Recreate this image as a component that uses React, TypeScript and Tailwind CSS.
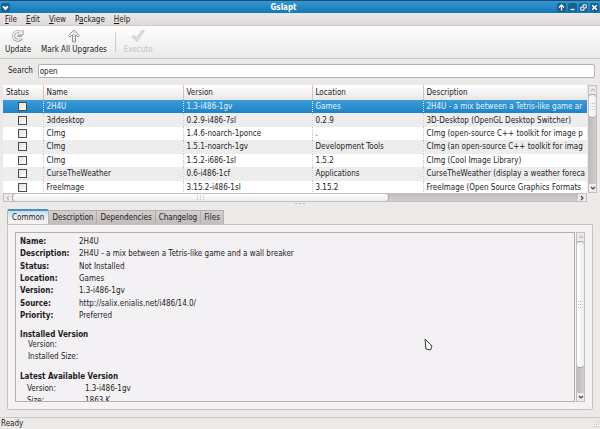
import React, { useState } from 'react';

interface Pkg {
  name: string;
  version: string;
  location: string;
  description: string;
}

const packages: Pkg[] = [
  { name: '2H4U', version: '1.3-i486-1gv', location: 'Games', description: '2H4U - a mix between a Tetris-like game ar' },
  { name: '3ddesktop', version: '0.2.9-i486-7sl', location: '0.2.9', description: '3D-Desktop (OpenGL Desktop Switcher)' },
  { name: 'CImg', version: '1.4.6-noarch-1ponce', location: '.', description: 'CImg (open-source C++ toolkit for image p' },
  { name: 'CImg', version: '1.5.1-noarch-1gv', location: 'Development Tools', description: 'CImg (an open-source C++ toolkit for imag' },
  { name: 'CImg', version: '1.5.2-i686-1sl', location: '1.5.2', description: 'CImg (Cool Image Library)' },
  { name: 'CurseTheWeather', version: '0.6-i486-1cf', location: 'Applications', description: 'CurseTheWeather (display a weather foreca' },
  { name: 'FreeImage', version: '3.15.2-i486-1sl', location: '3.15.2', description: 'FreeImage (Open Source Graphics Formats' },
];

const details = [
  ['Name:', '2H4U'],
  ['Description:', '2H4U - a mix between a Tetris-like game and a wall breaker'],
  ['Status:', 'Not Installed'],
  ['Location:', 'Games'],
  ['Version:', '1.3-i486-1gv'],
  ['Source:', 'http://salix.enialis.net/i486/14.0/'],
  ['Priority:', 'Preferred'],
];

const menus = [
  ['', 'F', 'ile'],
  ['', 'E', 'dit'],
  ['', 'V', 'iew'],
  ['P', 'a', 'ckage'],
  ['', 'H', 'elp'],
];

const tabs = ['Common', 'Description', 'Dependencies', 'Changelog', 'Files'];

const WindowButton: React.FC<{ label: string; children: React.ReactNode }> = ({ label, children }) => (
  <button aria-label={label} className="flex h-[9px] w-[9px] items-center justify-center rounded-xs bg-[#17618f]">
    <svg viewBox="0 0 9 9" className="h-[9px] w-[9px]" fill="none" stroke="#fff" strokeWidth="1.3">
      {children}
    </svg>
  </button>
);

const ToolButton: React.FC<{ label: string; disabled?: boolean; children: React.ReactNode }> = ({ label, disabled, children }) => (
  <button disabled={disabled} className="flex flex-col items-center gap-[2px] whitespace-nowrap px-[5px] text-[#1c1c1c] disabled:text-[#c3c3c3]">
    <svg viewBox="0 0 14 14" className="h-[14px] w-[14px]" fill="none">
      {children}
    </svg>
    <span className="leading-[10px]">{label}</span>
  </button>
);

const Arrow: React.FC<{ d: string; label: string; dim?: boolean }> = ({ d, label, dim }) => (
  <button aria-label={label} className={`flex h-2 w-2 shrink-0 items-center justify-center ${dim ? 'text-[#bdbbba]' : 'text-[#444]'}`}>
    <svg viewBox="0 0 6 6" className="h-[6px] w-[6px]" fill="none" stroke="currentColor" strokeWidth="1.1">
      <path d={d} />
    </svg>
  </button>
);

const Grip: React.FC<{ vertical?: boolean }> = ({ vertical }) => (
  <svg viewBox="0 0 5 7" className={vertical ? 'h-[7px] w-[5px]' : 'h-[7px] w-[5px] rotate-90'} fill="#c4c1c1">
    <path d="M0 0h1v1H0zM2 0h1v1H2zM4 0h1v1H4zM0 3h1v1H0zM2 3h1v1H2zM4 3h1v1H4zM0 6h1v1H0zM2 6h1v1H2zM4 6h1v1H4z" />
  </svg>
);

const VScroll: React.FC<{ thumb: string }> = ({ thumb }) => (
  <div className="flex w-[9px] shrink-0 flex-col items-center overflow-hidden border border-[#c2bfbe] bg-[#eceaea]">
    <Arrow d="M1 4L3 2L5 4" label="Scroll up" dim />
    <div className="min-h-0 w-full flex-1 bg-linear-to-r from-[#bfbbbb] to-[#d3cfcf]">
      <div className={`flex w-full items-center justify-center rounded-sm border-y border-[#a9a5a5] bg-linear-to-r from-white to-[#efeded] ${thumb}`}>
        <Grip vertical />
      </div>
    </div>
    <Arrow d="M1 2L3 4L5 2" label="Scroll down" />
  </div>
);

const App: React.FC = () => {
  const [query, setQuery] = useState('open');
  const [tab, setTab] = useState('Common');

  return (
    <div className="flex h-screen flex-col overflow-hidden bg-[#ebeae8] font-['DejaVu_Sans_Condensed','DejaVu_Sans',sans-serif] text-[8px] leading-[12px] text-[#1c1c1c]">
      <header className="flex h-[13px] shrink-0 items-center border-t border-[#1d4d69] bg-linear-to-b from-[#3297d4] to-[#1478b5] px-px">
        <WindowButton label="Window menu">
          <path d="M2 3.5L4.500 4.500L7 3.500L4.500 6.500z" fill="#fff" />
        </WindowButton>
        <h1 className="flex-1 pt-px text-center font-bold leading-[11px] text-white">Gslapt</h1>
        <div className="flex justify-end gap-[2px]">
          <WindowButton label="Shade">
            <path d="M4.500 7.500V2.500M2 4.500L4.500 2L7 4.500" />
          </WindowButton>
          <WindowButton label="Minimize">
            <path d="M2.500 6.500H6.500" />
          </WindowButton>
          <WindowButton label="Maximize">
            <path d="M1.800 4H5V7.200H1.800zM4 3.500V1.800H7.200V5H5.500" strokeWidth="1" />
          </WindowButton>
          <WindowButton label="Close">
            <path d="M2.200 2.200L6.800 6.800M6.800 2.200L2.200 6.800" strokeWidth="1.600" />
          </WindowButton>
        </div>
      </header>

      <nav className="flex h-[13px] shrink-0 items-center gap-[9px] border-b border-[#d0cccb] bg-linear-to-b from-[#ebe8e7] to-[#dfdbda] px-[5px] pt-px">
        {menus.map(([before, key, after]) => (
          <button key={key}>
            {before}
            <span className="underline">{key}</span>
            {after}
          </button>
        ))}
      </nav>

      <div className="flex h-[33px] shrink-0 items-center border-b border-[#cbc9c8] bg-linear-to-b from-white to-[#ebeae9]">
        <ToolButton label="Update">
          <g stroke="#8e8e8e" strokeWidth="3">
            <path d="M10.500 9.500A4.300 4.300 0 1 1 9.500 3.500" />
            <path d="M12 1V6H6.500" strokeWidth="1" />
          </g>
          <path d="M10.300 9.400A4.300 4.300 0 1 1 9.500 3.500" stroke="#f2f2f2" strokeWidth="1.600" />
          <path d="M11.300 2.500V5.300H7.500z" fill="#f2f2f2" />
          <path d="M6 7.200H11" stroke="#8e8e8e" />
        </ToolButton>
        <ToolButton label="Mark All Upgrades">
          <path d="M7 1L12.500 6.500L11 8L8.500 5.800V13H5.500V5.800L3 8L1.500 6.500z" fill="#f4f4f4" stroke="#959595" strokeWidth="1" />
          <path d="M7 3V12" stroke="#b5b5b5" strokeDasharray="1 1" />
        </ToolButton>
        <div className="mx-[3px] h-5 w-px bg-[#cfcdcc]" />
        <ToolButton label="Execute" disabled>
          <path d="M.8 8L3 6L5.500 8.500L11.200 1L13.500 1.800L6 12.500z" fill="#dcdcda" stroke="#d0d0ce" strokeWidth=".8" />
        </ToolButton>
      </div>

      <div className="flex shrink-0 items-center gap-[5px] pb-[7px] pl-2 pr-[5px] pt-[5px]">
        <label htmlFor="search">Search</label>
        <input
          id="search"
          value={query}
          onChange={(e) => setQuery(e.target.value)}
          className="h-[14px] min-w-0 flex-1 rounded-xs border border-[#b4b1b0] bg-white px-px outline-none"
        />
      </div>

      <section className="flex h-[108px] shrink-0 gap-px px-[3px]">
        <div className="min-w-0 flex-1 overflow-hidden bg-white">
          <table className="h-[109px] w-full table-fixed border-collapse text-left">
            <colgroup>
              <col className="w-[40px]" />
              <col className="w-[140px]" />
              <col className="w-[129px]" />
              <col className="w-[111px]" />
              <col />
            </colgroup>
            <thead>
              <tr className="h-[15px] bg-linear-to-b from-white to-[#e9e6e6]">
                {['Status', 'Name', 'Version', 'Location', 'Description'].map((heading) => (
                  <th key={heading} className="border-l border-[#c9c6c5] py-0 pl-[3px] font-normal first:border-l-0">
                    {heading}
                  </th>
                ))}
              </tr>
            </thead>
            <tbody>
              {packages.map((pkg, i) => (
                <tr
                  key={pkg.version}
                  className={i === 0 ? 'bg-linear-to-b from-[#3c9cd8] to-[#1c83c6] text-[#e4f2fc]' : i % 2 ? 'bg-[#eeedee]' : 'bg-white'}
                >
                  <td className="p-0">
                    <input
                      type="checkbox"
                      aria-label={`${pkg.name} ${pkg.version}`}
                      className="mx-auto block h-[9px] w-[9px] appearance-none border border-[#4d4d4d] bg-linear-to-br from-[#dedede] to-white"
                    />
                  </td>
                  {[pkg.name, pkg.version, pkg.location, pkg.description].map((text, col) => (
                    <td
                      key={col}
                      className={`overflow-hidden whitespace-nowrap border-l border-dotted py-0 pl-[3px] leading-[13px] ${i === 0 ? 'border-[#2f7fb3]' : 'border-[#c4c8cb]'}`}
                    >
                      {text}
                    </td>
                  ))}
                </tr>
              ))}
            </tbody>
          </table>
        </div>
        <VScroll thumb="h-[24px]" />
      </section>

      <div className="ml-[3px] mr-[13px] flex h-[9px] shrink-0 items-center overflow-hidden border border-[#c2bfbe] bg-[#eceaea]">
        <Arrow d="M4 1L2 3L4 5" label="Scroll left" dim />
        <div className="h-full min-w-0 flex-1 bg-linear-to-b from-[#bfbbbb] to-[#d3cfcf]">
          <div className="flex h-full w-2/3 items-center justify-center rounded-sm border-x border-[#a9a5a5] bg-linear-to-b from-white to-[#efeded]">
            <Grip />
          </div>
        </div>
        <Arrow d="M2 1L4 3L2 5" label="Scroll right" />
      </div>

      <div className="flex shrink-0 items-start justify-center gap-[2px] pb-[5px] pt-px">
        <span className="h-px w-[2px] bg-[#b9b6b4]" />
        <span className="h-px w-[2px] bg-[#b9b6b4]" />
        <span className="h-px w-[2px] bg-[#b9b6b4]" />
      </div>

      <div role="tablist" className="flex shrink-0 items-end pl-[7px]">
        {tabs.map((name) => (
          <button
            key={name}
            role="tab"
            aria-selected={tab === name}
            onClick={() => setTab(name)}
            className={
              tab === name
                ? 'h-[15px] rounded-t-xs border border-b-0 border-t-2 border-[#b5b2b2] border-t-[#4c8fbd] bg-linear-to-b from-[#c3deef] to-[#f3f1f2] to-60% px-1'
                : 'h-[14px] border border-b-0 border-l-0 border-[#b3adad] bg-linear-to-b from-[#d3cdcd] to-[#c3bcbc] px-[3px]'
            }
          >
            {name}
          </button>
        ))}
      </div>

      <main className="mx-[7px] mb-[7px] flex min-h-0 flex-1 gap-px rounded-b-xs border border-[#c4c1c0] bg-[#f4f2f3] p-[7px]">
        <div className="min-w-0 flex-1 overflow-hidden border border-[#b1aeae] bg-[#f3f1f3] px-1 pt-[3px]">
          <dl className="grid h-[86px] grid-cols-[59px_1fr] items-center">
            {details.map(([label, value]) => (
              <React.Fragment key={label}>
                <dt className="font-bold">{label}</dt>
                <dd>{value}</dd>
              </React.Fragment>
            ))}
          </dl>
          <h2 className="mt-2 font-bold leading-[10px]">Installed Version</h2>
          <dl className="grid grid-cols-[58px_1fr] pl-2">
            <dt className="leading-[10px]">Version:</dt>
            <dd />
            <dt className="leading-[14px]">Installed Size:</dt>
            <dd />
          </dl>
          <h2 className="mt-[7px] font-bold">Latest Available Version</h2>
          <dl className="grid grid-cols-[58px_1fr] pl-[7px]">
            <dt>Version:</dt>
            <dd>1.3-i486-1gv</dd>
            <dt>Size:</dt>
            <dd>1863 K</dd>
          </dl>
        </div>
        <VScroll thumb="h-5/6" />
      </main>

      <footer className="flex h-3 shrink-0 items-center justify-between border-t border-[#c9c7c5] pl-px">
        <span>Ready</span>
        <svg viewBox="0 0 8 8" className="h-2 w-2" fill="#cfcdcb">
          <path d="M6 0h1v1H6zM4 2h1v1H4zM6 2h1v1H6zM2 4h1v1H2zM4 4h1v1H4zM6 4h1v1H6zM0 6h1v1H0zM2 6h1v1H2zM4 6h1v1H4zM6 6h1v1H6z" />
        </svg>
      </footer>

      <svg viewBox="0 0 10 14" className="pointer-events-none absolute left-[424px] top-[338px] h-[14px] w-[10px]" fill="#f6f6f6" stroke="#3c3c3c">
        <path d="M1 1L8 8L6.500 12L2 11z" strokeLinejoin="round" />
      </svg>
    </div>
  );
};

export default App;
